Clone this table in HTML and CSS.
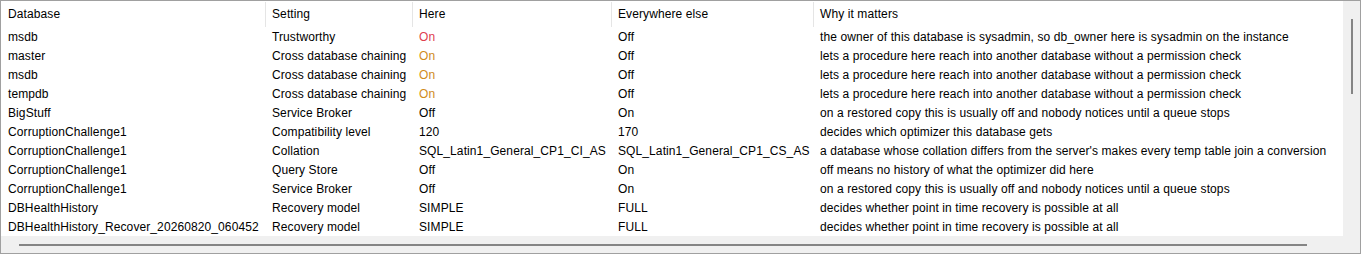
FILE: index.html
```html
<!DOCTYPE html>
<html>
<head>
<meta charset="utf-8">
<link rel="stylesheet" href="styles.css">
</head>
<body>
<div class="frame">
  <div class="view">
    <div class="grid">
      <div class="row head">
        <div class="hc first">Database</div>
        <div class="hc">Setting</div>
        <div class="hc">Here</div>
        <div class="hc">Everywhere else</div>
        <div class="hc">Why it matters</div>
      </div>
      <div class="row"><div class="c">msdb</div><div class="c">Trustworthy</div><div class="c red">On</div><div class="c">Off</div><div class="c">the owner of this database is sysadmin, so db_owner here is sysadmin on the instance</div></div>
      <div class="row"><div class="c">master</div><div class="c">Cross database chaining</div><div class="c orange">On</div><div class="c">Off</div><div class="c">lets a procedure here reach into another database without a permission check</div></div>
      <div class="row"><div class="c">msdb</div><div class="c">Cross database chaining</div><div class="c orange">On</div><div class="c">Off</div><div class="c">lets a procedure here reach into another database without a permission check</div></div>
      <div class="row"><div class="c">tempdb</div><div class="c">Cross database chaining</div><div class="c orange">On</div><div class="c">Off</div><div class="c">lets a procedure here reach into another database without a permission check</div></div>
      <div class="row"><div class="c">BigStuff</div><div class="c">Service Broker</div><div class="c">Off</div><div class="c">On</div><div class="c">on a restored copy this is usually off and nobody notices until a queue stops</div></div>
      <div class="row"><div class="c">CorruptionChallenge1</div><div class="c">Compatibility level</div><div class="c">120</div><div class="c">170</div><div class="c">decides which optimizer this database gets</div></div>
      <div class="row"><div class="c">CorruptionChallenge1</div><div class="c">Collation</div><div class="c">SQL_Latin1_General_CP1_CI_AS</div><div class="c">SQL_Latin1_General_CP1_CS_AS</div><div class="c">a database whose collation differs from the server's makes every temp table join a conversion</div></div>
      <div class="row"><div class="c">CorruptionChallenge1</div><div class="c">Query Store</div><div class="c">Off</div><div class="c">On</div><div class="c">off means no history of what the optimizer did here</div></div>
      <div class="row"><div class="c">CorruptionChallenge1</div><div class="c">Service Broker</div><div class="c">Off</div><div class="c">On</div><div class="c">on a restored copy this is usually off and nobody notices until a queue stops</div></div>
      <div class="row"><div class="c">DBHealthHistory</div><div class="c">Recovery model</div><div class="c">SIMPLE</div><div class="c">FULL</div><div class="c">decides whether point in time recovery is possible at all</div></div>
      <div class="row"><div class="c">DBHealthHistory_Recover_20260820_060452</div><div class="c">Recovery model</div><div class="c">SIMPLE</div><div class="c">FULL</div><div class="c">decides whether point in time recovery is possible at all</div></div>
    </div>
  </div>
  <div class="vscroll"><div class="vthumb"></div></div>
  <div class="hscroll"><div class="hthumb"></div></div>
  <div class="corner"></div>
</div>
</body>
</html>
```
FILE: styles.css
```css
* { box-sizing: border-box; }
html, body { margin: 0; padding: 0; background: #ffffff; }
body {
  font-family: "Liberation Sans", Arial, sans-serif;
  font-size: 12px;
  letter-spacing: 0.1px;
  color: #000000;
}
.frame {
  width: 1361px;
  height: 254px;
  border: 1px solid #a0a0a0;
  display: grid;
  grid-template-columns: 1342px 17px;
  grid-template-rows: 235px 17px;
  background: #f0f0f0;
}
.view {
  background: #ffffff;
  overflow: hidden;
}
.row {
  display: grid;
  grid-template-columns: 264px 147px 199px 202px 530px;
  height: 19px;
  white-space: nowrap;
}
.row.head {
  height: 27px;
  align-items: center;
}
.c {
  padding-left: 7px;
  line-height: 19px;
  overflow: hidden;
}
.hc {
  height: 25px;
  line-height: 25px;
  border-left: 1px solid #e5e5e5;
  padding-left: 6px;
  overflow: hidden;
}
.hc.first {
  border-left: none;
  padding-left: 7px;
}
.red { color: #e0404f; }
.orange { color: #d08c1c; }
.vscroll {
  background: #f0f0f0;
  display: flex;
  justify-content: center;
  padding-top: 18px;
}
.vthumb {
  width: 2px;
  height: 75px;
  background: #858585;
}
.hscroll {
  background: #f0f0f0;
  display: flex;
  align-items: center;
  padding-left: 18px;
}
.hthumb {
  width: 1288px;
  height: 2px;
  background: #858585;
}
.corner { background: #f0f0f0; }
```
